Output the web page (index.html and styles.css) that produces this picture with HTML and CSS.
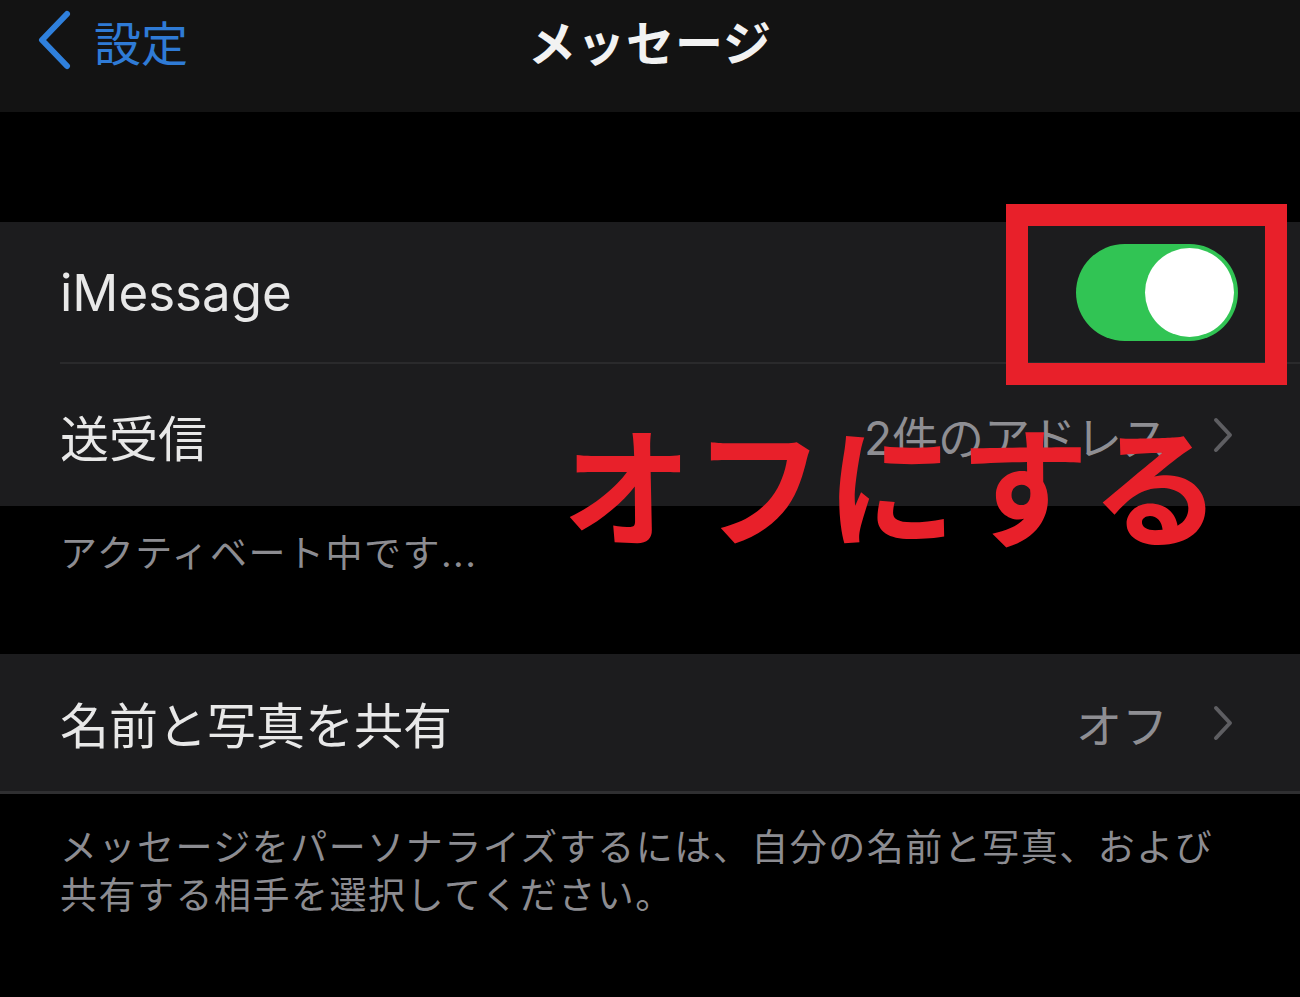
FILE: index.html
```html
<!DOCTYPE html>
<html lang="ja">
<head>
    <meta charset="UTF-8">
    <meta name="viewport" content="width=device-width, initial-scale=1.0">
    <title>メッセージ</title>
    <link rel="stylesheet" href="styles.css">
</head>
<body>
    <div class="screen">
        <header class="nav">
            <a class="back" href="#">
                <svg class="back-icon" viewBox="0 0 40 60" width="40" height="60">
                    <path d="M33 4 L8 30 L33 56" fill="none" stroke="#2f80dc" stroke-width="6" stroke-linecap="round" stroke-linejoin="round"/>
                </svg>
                <span>設定</span>
            </a>
            <h1 class="title">メッセージ</h1>
            <div></div>
        </header>

        <div class="gap"></div>

        <section class="group">
            <div class="row">
                <span class="label latin">iMessage</span>
                <div class="toggle on"><div class="knob"></div></div>
            </div>
            <div class="row">
                <span class="label">送受信</span>
                <span class="value">2件のアドレス</span>
                <svg class="chev" viewBox="0 0 22 38" width="22" height="38">
                    <path d="M4 4 L18 19 L4 34" fill="none" stroke="#5e5e62" stroke-width="4" stroke-linecap="round" stroke-linejoin="round"/>
                </svg>
            </div>
        </section>
        <p class="note note-one">アクティベート中です...</p>

        <section class="group group-two">
            <div class="row">
                <span class="label">名前と写真を共有</span>
                <span class="value">オフ</span>
                <svg class="chev" viewBox="0 0 22 38" width="22" height="38">
                    <path d="M4 4 L18 19 L4 34" fill="none" stroke="#5e5e62" stroke-width="4" stroke-linecap="round" stroke-linejoin="round"/>
                </svg>
            </div>
        </section>
        <p class="note note-two">メッセージをパーソナライズするには、自分の名前と写真、および<br>共有する相手を選択してください。</p>

        <!-- annotation drawn over the list -->
        <div class="mark-box"></div>
        <div class="mark-text">オフにする</div>
    </div>
</body>
</html>
```

FILE: styles.css
```css
* {
    box-sizing: border-box;
}
body {
    margin: 0;
    background: #000;
    font-family: Inter, "Noto Sans CJK JP", sans-serif;
}
.screen {
    position: relative;
    width: 1300px;
    height: 997px;
    overflow: hidden;
    background: #000;
}

/* top bar */
.nav {
    height: 112px;
    background: #131313;
    display: grid;
    grid-template-columns: 1fr auto 1fr;
    align-items: center;
    padding-bottom: 32px;
}
.back {
    display: flex;
    align-items: center;
    gap: 20px;
    padding-left: 34px;
    color: #2f7bd6;
    text-decoration: none;
    font-size: 47px;
}
.back-icon {
    display: block;
}
.title {
    margin: 0;
    color: #f2f2f2;
    font-size: 48px;
    font-weight: 700;
    letter-spacing: 1px;
}

.gap {
    height: 110px;
}

/* grouped list */
.group {
    background: #1c1c1e;
}
.row {
    height: 142px;
    display: flex;
    align-items: center;
    margin-left: 60px;
    padding-right: 62px;
    border-bottom: 2px solid #2a2a2c;
}
.row:last-child {
    border-bottom: none;
}
.label {
    color: #e8e8e8;
    font-size: 49px;
    flex: 1;
}
.label.latin {
    font-size: 51px;
}
.value {
    color: #8e8e93;
    font-size: 46px;
    margin-right: 44px;
}
.chev {
    display: block;
    margin-right: 4px;
}
.group-two {
    border-bottom: 3px solid #2f2f31;
}
.group-two .row {
    height: 137px;
}

.toggle {
    width: 162px;
    height: 97px;
    border-radius: 49px;
    background: #31c454;
    padding: 4px;
    display: flex;
    justify-content: flex-end;
}
.knob {
    width: 89px;
    height: 89px;
    border-radius: 50%;
    background: #fff;
}

.note {
    margin: 0;
    padding-left: 60px;
    color: #8c8c91;
    font-size: 37px;
    letter-spacing: 1.5px;
}
.note-one {
    height: 148px;
    padding-top: 18px;
}
.note-two {
    padding-top: 30px;
    line-height: 48px;
}

/* red callout */
.mark-box {
    position: absolute;
    left: 1006px;
    top: 204px;
    width: 281px;
    height: 181px;
    border: 22px solid #e8202a;
}
.mark-text {
    position: absolute;
    left: 562px;
    top: 386px;
    color: #e8202a;
    font-size: 130px;
    font-weight: 700;
    letter-spacing: 2px;
    font-family: "Noto Sans CJK JP", sans-serif;
}
```
